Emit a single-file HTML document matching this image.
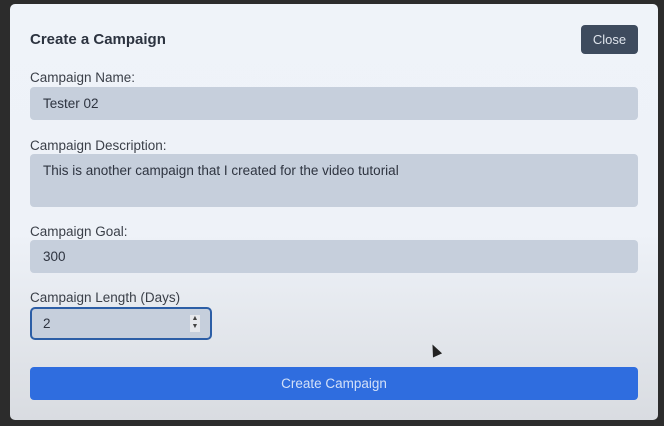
<!DOCTYPE html>
<html><head><style>
body{margin:0;width:664px;height:426px;background:#2c2c2c;font-family:"Liberation Sans",sans-serif;position:relative;overflow:hidden}
.m{position:absolute;left:10px;top:4px;width:648px;height:416px;border-radius:5px;background:linear-gradient(#eff3f9 0%,#eef2f8 55%,#d9dce1 100%)}
.a{position:absolute}
.t{left:20px;top:27px;font-weight:bold;font-size:15px;color:#2c3340}
.c{left:571px;top:21px;width:57px;height:29px;background:#3e4b5e;border-radius:4px;color:#dfe4ec;font-size:13px;text-align:center;line-height:29px}
.l{left:20px;font-size:13.5px;color:#3a3f48}
.i{left:20px;width:608px;background:#c6cfdc;border-radius:4px;font-size:13.5px;color:#2e3440;box-sizing:border-box;padding-left:13px}
</style></head><body><div class="m">
<div class="a t">Create a Campaign</div>
<div class="a c">Close</div>
<div class="a l" style="top:66px">Campaign Name:</div>
<div class="a i" style="top:83px;height:33px;line-height:33px">Tester 02</div>
<div class="a l" style="top:134px">Campaign Description:</div>
<div class="a i" style="top:150px;height:53px;padding-top:9px">This is another campaign that I created for the video tutorial</div>
<div class="a l" style="top:220px">Campaign Goal:</div>
<div class="a i" style="top:236px;height:33px;line-height:33px">300</div>
<div class="a l" style="top:286px">Campaign Length (Days)</div>
<div class="a i" style="top:303px;width:182px;height:33px;line-height:29px;border:2px solid #2c5ea6;border-radius:5px;padding-left:11px">2
<div class="a" style="right:10px;top:6px;width:10px;height:17px;background:#e6e8ec;font-size:7px;line-height:8px;text-align:center;color:#444">▲<br>▼</div></div>
<div class="a" style="left:20px;top:363px;width:608px;height:33px;background:#2f6ddf;border-radius:4px;color:#d2e0f8;font-size:13.5px;text-align:center;line-height:33px">Create Campaign</div>
<div class="a" style="left:420px;top:340px;width:0;height:0;border-left:5px solid transparent;border-right:5px solid transparent;border-bottom:12px solid #222;transform:rotate(-25deg)"></div>
</div></body></html>
